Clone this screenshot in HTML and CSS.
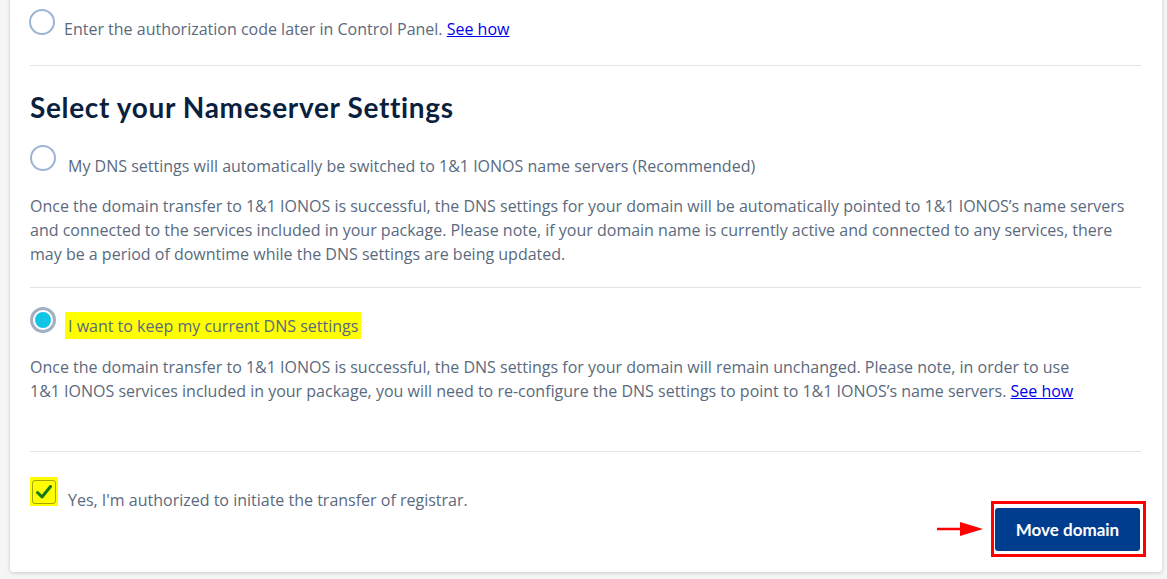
FILE: index.html
```html
<!DOCTYPE html>
<html lang="en">
<head>
<meta charset="utf-8">
<title>Move domain</title>
<link rel="stylesheet" href="styles.css">
</head>
<body>
<div class="card">
  <div class="option option-top">
    <span class="radio"></span>
    <span class="label">Enter the authorization code later in Control Panel. <a href="#" class="link">See how</a></span>
  </div>
  <hr class="divider divider-top">

  <h2 class="heading">Select your Nameserver Settings</h2>

  <div class="option option-first">
    <span class="radio"></span>
    <span class="label">My DNS settings will automatically be switched to 1&amp;1 IONOS name servers (Recommended)</span>
  </div>
  <p class="desc desc-first">Once the domain transfer to 1&amp;1 IONOS is successful, the DNS settings for your domain will be automatically pointed to 1&amp;1 IONOS’s name servers and connected to the services included in your package. Please note, if your domain name is currently active and connected to any services, there may be a period of downtime while the DNS settings are being updated.</p>
  <hr class="divider divider-mid">

  <div class="option option-second">
    <span class="radio radio-checked"><span class="radio-dot"></span></span>
    <span class="label label-hl"><span class="highlight">I want to keep my current DNS settings</span></span>
  </div>
  <p class="desc desc-second">Once the domain transfer to 1&amp;1 IONOS is successful, the DNS settings for your domain will remain unchanged. Please note, in order to use<br>1&amp;1 IONOS services included in your package, you will need to re-configure the DNS settings to point to 1&amp;1 IONOS’s name servers. <a href="#" class="link">See how</a></p>
  <hr class="divider divider-bottom">

  <div class="footer">
    <div class="check-row">
      <span class="check-hl"><span class="checkbox"><svg width="18" height="16" viewBox="0 0 18 16"><path d="M2.5 8.5 L7 13 L15.5 2.5" fill="none" stroke="#157a16" stroke-width="3" stroke-linecap="round" stroke-linejoin="round"/></svg></span></span>
      <span class="label check-label">Yes, I'm authorized to initiate the transfer of registrar.</span>
    </div>
    <div class="action">
      <svg class="arrow" width="46" height="16" viewBox="0 0 46 16"><line x1="0" y1="8" x2="26" y2="8" stroke="#f00" stroke-width="2.5"/><polygon points="23,1 46,8 23,15" fill="#f00"/></svg>
      <div class="outline">
        <button class="btn" type="button">Move domain</button>
      </div>
    </div>
  </div>
</div>
</body>
</html>
```

FILE: styles.css
```css
html, body {
  margin: 0;
  padding: 0;
}
body {
  background: #f6f6f6;
  font-family: "Open Sans", "Liberation Sans", sans-serif;
  font-size: 16px;
  color: #5a6a7e;
  height: 579px;
  overflow: hidden;
}
.card {
  box-sizing: border-box;
  width: 1152px;
  margin: -20px 0 0 10px;
  padding: 29px 21px 15px 20px;
  background: #fff;
  box-shadow: 0 1px 4px rgba(0, 0, 0, 0.18);
  border-radius: 0 0 4px 4px;
}
.option {
  display: flex;
  align-items: flex-start;
  gap: 12px;
}
.option-top {
  gap: 9px;
}
.option-top .radio {
  margin-left: -1px;
}
.radio {
  flex: none;
  box-sizing: border-box;
  width: 26px;
  height: 26px;
  border-radius: 50%;
  border: 2px solid #9db4d3;
  background: #fff;
  display: flex;
  align-items: center;
  justify-content: center;
}
.radio-checked {
  border: 3px solid #a2b0c2;
}
.radio-dot {
  width: 16px;
  height: 16px;
  border-radius: 50%;
  background: #12c5e6;
}
.label {
  line-height: 24px;
  margin-top: 8px;
}
.option-first .label {
  margin-top: 9px;
}
.label-hl {
  margin-top: 5px;
  margin-left: -3px;
}
.highlight {
  display: inline-block;
  background: #ffff00;
  padding: 2px 3px 1px 3px;
  line-height: 24px;
}
.link {
  color: #0000ee;
  text-decoration: underline;
}
.divider {
  border: 0;
  border-top: 1px solid #e3e3e3;
  margin: 0;
  height: 0;
}
.divider-top {
  margin-top: 24px;
}
.heading {
  margin: 24px 0 0 0;
  font-family: "Lato", "Open Sans", sans-serif;
  font-weight: 700;
  font-size: 28px;
  line-height: 34px;
  color: #0b1f3f;
  letter-spacing: 0.65px;
}
.option-first {
  margin-top: 21px;
}
.desc {
  margin: 0;
  line-height: 24px;
}
.desc-first {
  margin-top: 16px;
}
.divider-mid {
  margin-top: 21px;
}
.option-second {
  margin-top: 19px;
}
.desc-second {
  margin-top: 16px;
}
.divider-bottom {
  margin-top: 48px;
}
.footer {
  display: flex;
  justify-content: space-between;
  align-items: flex-start;
  margin-top: 25px;
}
.check-row {
  display: flex;
  align-items: flex-start;
  gap: 10px;
}
.check-hl {
  flex: none;
  width: 28px;
  height: 29px;
  background: #ffff00;
  display: flex;
  align-items: center;
  justify-content: center;
}
.checkbox {
  box-sizing: border-box;
  width: 24px;
  height: 24px;
  border: 1px solid rgba(0, 0, 0, 0.35);
  border-radius: 3px;
  display: flex;
  align-items: center;
  justify-content: center;
}
.check-label {
  margin-top: 11px;
}
.action {
  display: flex;
  align-items: center;
  gap: 8px;
  margin-top: 24px;
  margin-right: -5px;
}
.arrow {
  display: block;
}
.outline {
  border: 3px solid #f00;
  padding: 4px 3px 3px 1px;
}
.btn {
  display: block;
  width: 145px;
  height: 43px;
  border: 0;
  border-radius: 3px;
  background: #003d8f;
  color: #fff;
  font-family: "Lato", "Open Sans", sans-serif;
  font-weight: 700;
  font-size: 17px;
  cursor: pointer;
}
```
